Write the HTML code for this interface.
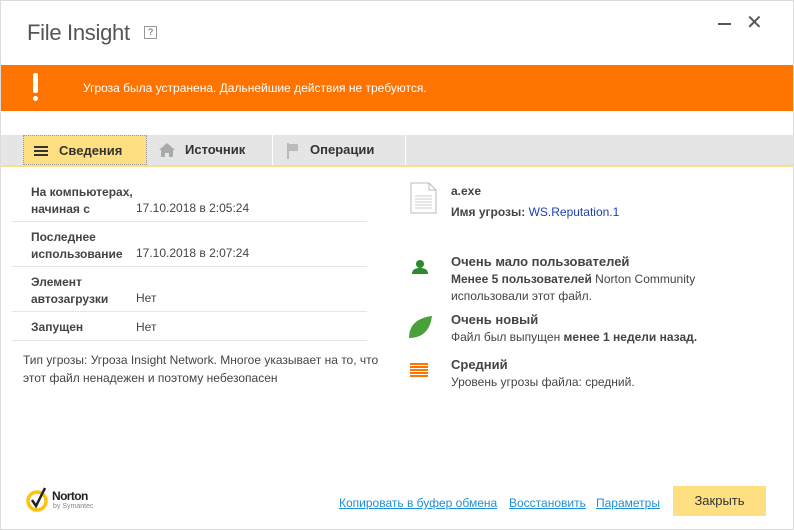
<!DOCTYPE html>
<html><head><meta charset="utf-8"><style>
*{margin:0;padding:0;box-sizing:border-box}
body{width:794px;height:530px;background:#fff;font-family:"Liberation Sans","Noto Sans CJK SC",sans-serif;font-size:12px;color:#444;position:relative;overflow:hidden}
.win{position:absolute;left:0;top:0;width:794px;height:530px;border:1px solid #dcdcdc}
.a{position:absolute;white-space:nowrap}
.b{font-weight:bold;color:#444}
.hr{position:absolute;left:12px;width:355px;height:1px;background:#e6e6e6}
.tab{position:absolute;top:135px;height:30px;background:#e5e5e5;font-weight:bold;font-size:13px;color:#333;line-height:30px}
a{color:#1f8fd6;text-decoration:underline}
</style></head><body><div class="win"></div>
<div class="a" style="left:27px;top:20px;font-size:22px;color:#555;letter-spacing:-0.3px">File Insight</div>
<div class="a" style="left:144px;top:26px;width:13px;height:13px;border:1px solid #999;font-size:9px;line-height:11px;text-align:center;color:#555">?</div>
<div class="a" style="left:718px;top:23px;width:13px;height:2px;background:#555"></div>
<div class="a" style="left:746px;top:10px;font-size:20px;color:#555">✕</div>
<div class="a" style="left:1px;top:65px;width:792px;height:46px;background:#ff7300"></div>
<div class="a" style="left:33px;top:73px;width:5px;height:20px;background:#fff;border-radius:2px"></div>
<div class="a" style="left:33px;top:96px;width:5px;height:5px;background:#fff;border-radius:50%"></div>
<div class="a" style="left:83px;top:81px;color:#fff;font-size:12px">Угроза была устранена. Дальнейшие действия не требуются.</div>
<div class="a" style="left:1px;top:135px;width:792px;height:30px;background:#e5e5e5"></div>
<div class="a" style="left:1px;top:165px;width:792px;height:2px;background:#fbe08b"></div>
<div class="tab" style="left:23px;width:124px;background:#fee082;border:1px dotted #999"><span style="position:absolute;left:10px;top:10px;width:14px;height:10px;background:repeating-linear-gradient(#333 0 2px,transparent 2px 4px)"></span><span style="position:absolute;left:35px">Сведения</span></div>
<div class="tab" style="left:148px;width:124px"><svg style="position:absolute;left:11px;top:8px" width="16" height="14"><path d="M8 0L0 7h2v7h4v-4h4v4h4V7h2z" fill="#aaa"/></svg><span style="position:absolute;left:37px">Источник</span></div>
<div class="a" style="left:272px;top:135px;width:1px;height:30px;background:#fff"></div>
<div class="tab" style="left:273px;width:132px"><svg style="position:absolute;left:14px;top:8px" width="12" height="16"><path d="M1 0v16" stroke="#aaa" stroke-width="1.5"/><path d="M2 1h9v7H2z" fill="#bbb"/></svg><span style="position:absolute;left:37px">Операции</span></div>
<div class="a" style="left:405px;top:135px;width:1px;height:30px;background:#fff"></div>
<div class="a b" style="left:31px;top:184px;line-height:17px">На компьютерах,<br>начиная с</div>
<div class="a" style="left:136px;top:201px">17.10.2018 в 2:05:24</div>
<div class="hr" style="top:221px"></div>
<div class="a b" style="left:31px;top:229px;line-height:17px">Последнее<br>использование</div>
<div class="a" style="left:136px;top:246px">17.10.2018 в 2:07:24</div>
<div class="hr" style="top:266px"></div>
<div class="a b" style="left:31px;top:274px;line-height:17px">Элемент<br>автозагрузки</div>
<div class="a" style="left:136px;top:291px">Нет</div>
<div class="hr" style="top:311px"></div>
<div class="a b" style="left:31px;top:320px">Запущен</div>
<div class="a" style="left:136px;top:320px">Нет</div>
<div class="hr" style="top:340px"></div>
<div class="a" style="left:23px;top:351px;line-height:18px">Тип угрозы: Угроза Insight Network. Многое указывает на то, что<br>этот файл ненадежен и поэтому небезопасен</div>
<svg class="a" style="left:410px;top:182px" width="28" height="32"><path d="M1 1h18l7 7v23H1z" fill="#fff" stroke="#bbb"/><path d="M19 1v7h7" fill="none" stroke="#bbb"/><path d="M5 14h17M5 17h17M5 20h17M5 23h17M5 26h17" stroke="#ccc"/></svg>
<div class="a b" style="left:451px;top:184px">a.exe</div>
<div class="a" style="left:451px;top:205px"><b>Имя угрозы:</b> <span style="color:#1a3fb5">WS.Reputation.1</span></div>
<svg class="a" style="left:412px;top:260px" width="16" height="14"><circle cx="8" cy="4" r="4" fill="#2b8a2b"/><path d="M0 14c0-5 4-6 8-6s8 1 8 6z" fill="#2b8a2b"/></svg>
<div class="a b" style="left:451px;top:254px;font-size:13px">Очень мало пользователей</div>
<div class="a" style="left:451px;top:272px"><b>Менее 5 пользователей</b> Norton Community</div>
<div class="a" style="left:451px;top:289px">использовали этот файл.</div>
<svg class="a" style="left:407px;top:315px" width="26" height="24"><path d="M2 23C2 10 10 3 25 1 23 16 15 23 2 23z" fill="#4aa03a"/></svg>
<div class="a b" style="left:451px;top:312px;font-size:13px">Очень новый</div>
<div class="a" style="left:451px;top:330px">Файл был выпущен <b>менее 1 недели назад.</b></div>
<div class="a" style="left:410px;top:363px;width:18px;height:15px;background:repeating-linear-gradient(#ff7300 0 2px,transparent 2px 3px)"></div>
<div class="a b" style="left:451px;top:357px;font-size:13px">Средний</div>
<div class="a" style="left:451px;top:375px">Уровень угрозы файла: средний.</div>
<svg class="a" style="left:26px;top:487px" width="24" height="26"><circle cx="11" cy="14" r="9" fill="none" stroke="#ffc20e" stroke-width="3.5"/><path d="M6 13l4 6 9-18" fill="none" stroke="#222" stroke-width="2.5"/></svg>
<div class="a" style="left:52px;top:489px;font-weight:bold;font-size:12px;color:#222;letter-spacing:-0.6px">Norton</div>
<div class="a" style="left:53px;top:503px;font-size:7px;color:#888">by Symantec</div>
<div class="a" style="left:339px;top:496px"><a>Копировать в буфер обмена</a></div>
<div class="a" style="left:509px;top:496px"><a>Восстановить</a></div>
<div class="a" style="left:596px;top:496px"><a>Параметры</a></div>
<div class="a" style="left:673px;top:486px;width:93px;height:30px;background:#fee082;text-align:center;line-height:30px;font-size:13px;color:#333">Закрыть</div>
</body></html>
